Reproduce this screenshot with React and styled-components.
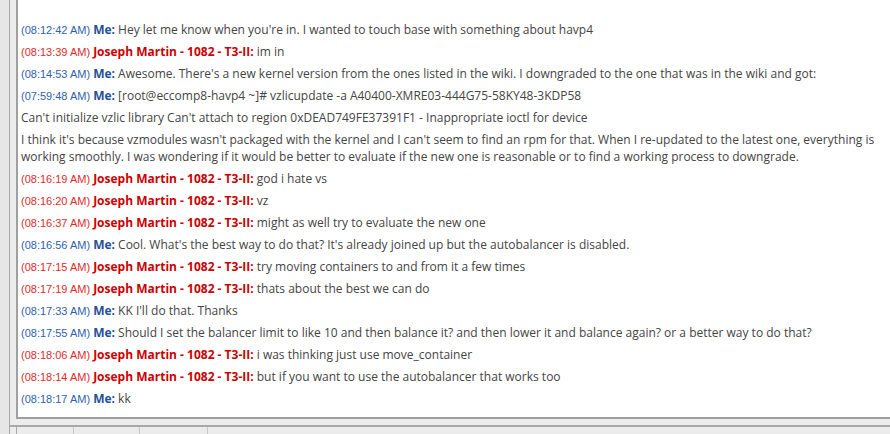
import React from 'react';
import styled, { createGlobalStyle } from 'styled-components';

const GlobalStyle = createGlobalStyle`
  html, body {
    margin: 0;
    padding: 0;
    background: #e9e9e9;
  }
  body {
    font-family: "Open Sans", "Liberation Sans", sans-serif;
  }
`;

const ME = 'Me';
const JOE = 'Joseph Martin - 1082 - T3-II';

const messages = [
  { time: '08:12:42 AM', from: ME, text: "Hey let me know when you're in. I wanted to touch base with something about havp4" },
  { time: '08:13:39 AM', from: JOE, text: 'im in' },
  { time: '08:14:53 AM', from: ME, text: "Awesome. There's a new kernel version from the ones listed in the wiki. I downgraded to the one that was in the wiki and got:" },
  { time: '07:59:48 AM', from: ME, text: '[root@eccomp8-havp4 ~]# vzlicupdate -a A40400-XMRE03-444G75-58KY48-3KDP58' },
  { text: "Can't initialize vzlic library Can't attach to region 0xDEAD749FE37391F1 - Inappropriate ioctl for device" },
  { text: "I think it's because vzmodules wasn't packaged with the kernel and I can't seem to find an rpm for that. When I re-updated to the latest one, everything is working smoothly. I was wondering if it would be better to evaluate if the new one is reasonable or to find a working process to downgrade." },
  { time: '08:16:19 AM', from: JOE, text: 'god i hate vs' },
  { time: '08:16:20 AM', from: JOE, text: 'vz' },
  { time: '08:16:37 AM', from: JOE, text: 'might as well try to evaluate the new one' },
  { time: '08:16:56 AM', from: ME, text: "Cool. What's the best way to do that? It's already joined up but the autobalancer is disabled." },
  { time: '08:17:15 AM', from: JOE, text: 'try moving containers to and from it a few times' },
  { time: '08:17:19 AM', from: JOE, text: 'thats about the best we can do' },
  { time: '08:17:33 AM', from: ME, text: "KK I'll do that. Thanks" },
  { time: '08:17:55 AM', from: ME, text: 'Should I set the balancer limit to like 10 and then balance it? and then lower it and balance again? or a better way to do that?' },
  { time: '08:18:06 AM', from: JOE, text: 'i was thinking just use move_container' },
  { time: '08:18:14 AM', from: JOE, text: 'but if you want to use the autobalancer that works too' },
  { time: '08:18:17 AM', from: ME, text: 'kk' },
];

const tabs = [56, 65, 67, 700];

const App = () => {
  return (
    <>
      <GlobalStyle />
      <Window>
        <Gutter />
        <Main>
          <LogFrame>
            <Log>
              {messages.map((m, i) => {
                const mine = m.from === ME;
                return (
                  <Line key={i}>
                    {m.time && <Stamp $mine={mine}>({m.time})</Stamp>}
                    {m.from && <Sender $mine={mine}>{m.from}:</Sender>}
                    {m.from ? ' ' : ''}
                    {m.text}
                  </Line>
                );
              })}
            </Log>
            <ScrollEdge />
          </LogFrame>
          <Divider />
          <TabBar>
            {tabs.map((w, i) => (
              <Tab key={i} style={{ width: w }} />
            ))}
          </TabBar>
        </Main>
      </Window>
    </>
  );
};

const Window = styled.div`
  display: flex;
  width: 890px;
  height: 434px;
  background: #e9e9e9;
  overflow: hidden;
`;

const Gutter = styled.div`
  width: 9px;
  flex: none;
  background: #e6e6e6;
  border-right: 1px solid #a8a8a8;
`;

const Main = styled.div`
  flex: 1;
  display: flex;
  flex-direction: column;
  padding-left: 6px;
  background: #ececec;
`;

const LogFrame = styled.div`
  height: 419px;
  display: flex;
  background: #fff;
  border-left: 2px solid #a0a0a0;
  border-bottom: 2px solid #a0a0a0;
  box-sizing: border-box;
`;

const Log = styled.div`
  flex: 1;
  padding: 21px 0 0 3px;
`;

const ScrollEdge = styled.div`
  width: 3px;
  height: 416px;
  background: #9a9a9a;
`;

const Line = styled.p`
  margin: 0 0 5px;
  font-size: 12px;
  line-height: 17px;
  color: #444;
  padding-right: 6px;
`;

const Stamp = styled.span`
  font-family: "Liberation Sans", Arial, sans-serif;
  font-size: 11px;
  line-height: 11px;
  color: ${({ $mine }) => ($mine ? '#2f5fae' : '#e02a2a')};
  margin-right: 3px;
`;

const Sender = styled.span`
  font-weight: 700;
  color: ${({ $mine }) => ($mine ? '#24509a' : '#cc0000')};
`;

const Divider = styled.div`
  height: 6px;
  border-bottom: 2px solid #a8a8a8;
  margin-left: -6px;
`;

const TabBar = styled.div`
  flex: 1;
  display: flex;
  border-left: 1px solid #a8a8a8;
`;

const Tab = styled.div`
  flex: none;
  background: #ebebeb;
  border-right: 1px solid #c8c8c8;
`;

export default App;
